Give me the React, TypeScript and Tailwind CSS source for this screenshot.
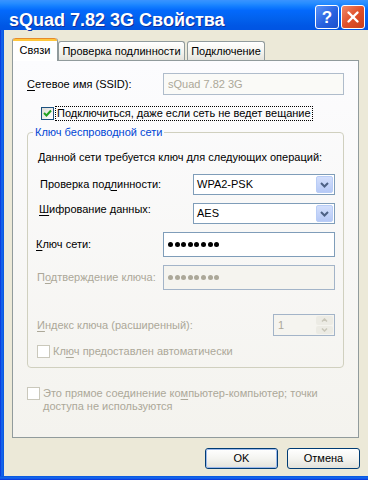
import { X } from "lucide-react";

const ui = "font-['Liberation_Sans',Arial,sans-serif] text-[11px] leading-[13px]";

function U({ children }: { children: string }) {
  return <span className="underline underline-offset-[2px]">{children}</span>;
}

function CheckBox({ checked, disabled }: { checked?: boolean; disabled?: boolean }) {
  return (
    <div
      className={
        "w-[13px] h-[13px] shrink-0 border flex items-center justify-center " +
        (disabled
          ? "border-[#CAC8BB] bg-white"
          : "border-[#1C5180] bg-[linear-gradient(135deg,#DCDCD7,#FFFFFF)]")
      }
    >
      {checked && (
        <svg width="9" height="9" viewBox="0 0 9 9">
          <path d="M1 4 L3.5 6.5 L8 1.5" fill="none" stroke="#21A121" strokeWidth="2" />
        </svg>
      )}
    </div>
  );
}

function Dots({ gray }: { gray?: boolean }) {
  return (
    <div className="flex gap-[1.6px]">
      {Array.from({ length: 8 }).map((_, i) => (
        <span
          key={i}
          className={"w-[5px] h-[5px] rounded-full " + (gray ? "bg-[#ACA899]" : "bg-black")}
        />
      ))}
    </div>
  );
}

function Combo({ value }: { value: string }) {
  return (
    <div className="w-[142px] h-[21px] border border-[#7F9DB9] bg-white flex items-center pl-[3px] pr-[1px]">
      <span className="flex-1">{value}</span>
      <div className="w-[17px] h-[17px] rounded-[2px] border border-[#B9CDF6] bg-[linear-gradient(to_bottom,#D3DFFC,#B6C9F6)] flex items-center justify-center">
        <svg width="9" height="6" viewBox="0 0 9 6">
          <path d="M1 1 L4.5 4.5 L8 1" fill="none" stroke="#4D6185" strokeWidth="2" />
        </svg>
      </div>
    </div>
  );
}

function TabButton({ label, active, className = "" }: { label: string; active?: boolean; className?: string }) {
  if (active) {
    return (
      <div
        className={
          "relative z-10 -mb-px h-[23px] bg-white border-x border-[#919B9C] rounded-t-[3px] flex flex-col whitespace-nowrap " +
          className
        }
      >
        <div className="h-[3px] rounded-t-[3px] border-t border-[#E68B2C] bg-[#FFC73C]" />
        <div className="flex-1 flex items-center justify-center pb-[2px]">{label}</div>
      </div>
    );
  }
  return (
    <div
      className={
        "h-[19px] border-x border-t border-[#919B9C] rounded-t-[3px] bg-[linear-gradient(to_bottom,#FFFFFF,#F3F2EC_60%,#E4E3DC)] flex items-center justify-center whitespace-nowrap " +
        className
      }
    >
      {label}
    </div>
  );
}

function XpButton({ label, isDefault }: { label: string; isDefault?: boolean }) {
  return (
    <div className="w-[73px] h-[21px] rounded-[3px] border border-[#003C74] bg-[linear-gradient(to_bottom,#FFFFFF,#F4F4F0_50%,#E3E2DA)]">
      <div
        className={
          "h-full rounded-[2px] flex items-center justify-center " +
          (isDefault ? "border-[1.5px] border-[#9DB9EB]" : "")
        }
      >
        {label}
      </div>
    </div>
  );
}

export default function App() {
  return (
    <div className={"w-[368px] h-[480px] overflow-hidden flex flex-col bg-[#ECE9D8] text-black " + ui}>
      {/* title bar */}
      <div className="h-[30px] shrink-0 flex items-start pl-[9px] pr-[3px] bg-[linear-gradient(to_bottom,#3A93FF_0%,#288EFF_10%,#127DFF_22%,#0369FC_35%,#0262EE_60%,#0057E5_85%,#0054E3_100%)]">
        <div className="pt-[11px] text-[18px] leading-[18px] font-bold text-white [text-shadow:1px_1px_#0F2F9C]">
          sQuad 7.82 3G Свойства
        </div>
        <div className="ml-auto mt-[5px] flex gap-[2px]">
          <div className="w-[24px] h-[24px] rounded-[3px] border border-white bg-[linear-gradient(135deg,#5A93F8,#2862E0_55%,#1B4FCB)] flex items-center justify-center">
            <span className="text-white font-bold text-[17px] leading-[17px]">?</span>
          </div>
          <div className="w-[24px] h-[24px] rounded-[3px] border border-white bg-[linear-gradient(135deg,#F0896A,#E0502A_50%,#C9401C)] flex items-center justify-center">
            <X className="w-[18px] h-[18px] text-white" strokeWidth={3.2} />
          </div>
        </div>
      </div>

      {/* body */}
      <div className="flex-1 flex">
        <div className="w-[4px] bg-[linear-gradient(to_right,#0831D9,#166AEE_45%,#0855DD)]" />
        <div className="flex-1 flex flex-col pl-[8px] pr-[8px] pt-[8px]">
          {/* tabs */}
          <div className="h-[22px] flex items-end">
            <TabButton label="Связи" active className="w-[46px]" />
            <TabButton label="Проверка подлинности" className="w-[127px]" />
            <TabButton label="Подключение" className="w-[78px] ml-[2px]" />
          </div>

          {/* panel */}
          <div className="h-[378px] mr-px border border-[#919B9C] bg-[linear-gradient(to_bottom,#FCFCFE,#F4F3EE)] flex flex-col">
            <div className="mt-[12px] h-[22px] flex items-center">
              <div className="w-[150px] pl-[14px]">
                <U>С</U>етевое имя (SSID):
              </div>
              <div className="w-[181px] h-[22px] border border-[#AFBCCB] bg-[#FAFAF7] flex items-center pl-[4px] text-[#ACA899]">
                sQuad 7.82 3G
              </div>
            </div>

            <div className="mt-[12px] h-[13px] flex items-center pl-[28px]">
              <CheckBox checked />
              <span className="ml-[1px] px-[1px] border border-dotted border-black leading-[13px]">
                Подключи<U>т</U>ься, даже если сеть не ведет вещание
              </span>
            </div>

            <fieldset className="mt-[6px] ml-[14px] w-[317px] border border-[#D0D0BF] rounded-[4px] pb-[9px]">
              <legend className="ml-[5px] px-[2px] text-[#0046D5] leading-[13px]">Ключ беспроводной сети</legend>
              <div className="mt-[12px] pl-[10px]">Данной сети требуется ключ для следующих операций:</div>

              <div className="mt-[10px] flex items-center">
                <div className="w-[165px] pl-[12px]">
                  Проверка под<U>л</U>инности:
                </div>
                <Combo value="WPA2-PSK" />
              </div>

              <div className="mt-[8px] flex items-start">
                <div className="w-[165px] pl-[11px]">
                  <U>Ш</U>ифрование данных:
                </div>
                <Combo value="AES" />
              </div>

              <div className="mt-[8px] flex items-center">
                <div className="w-[135px] pl-[8px]">
                  <U>К</U>люч сети:
                </div>
                <div className="w-[172px] h-[25px] border border-[#7F9DB9] bg-white flex items-center pl-[4px]">
                  <Dots />
                </div>
              </div>

              <div className="mt-[8px] flex items-center text-[#ACA899]">
                <div className="w-[135px] pl-[9px]">
                  П<U>о</U>дтверждение ключа:
                </div>
                <div className="w-[172px] h-[25px] border border-[#A3B4C8] bg-[#F5F4EF] flex items-center pl-[4px]">
                  <Dots gray />
                </div>
              </div>

              <div className="mt-[24px] flex items-center text-[#ACA899]">
                <div className="w-[245px] pl-[9px]">
                  <U>И</U>ндекс ключа (расширенный):
                </div>
                <div className="w-[62px] h-[22px] border border-[#A3B4C8] bg-[#F5F4EF] flex items-center pl-[4px] pr-[1px]">
                  <span className="flex-1">1</span>
                  <div className="w-[17px] h-[18px] flex flex-col gap-px">
                    <div className="flex-1 rounded-[2px] bg-[#ECEBE4] flex items-center justify-center">
                      <svg width="7" height="4" viewBox="0 0 7 4">
                        <path d="M1 3.5 L3.5 1 L6 3.5" fill="none" stroke="#C9C7BA" strokeWidth="1.5" />
                      </svg>
                    </div>
                    <div className="flex-1 rounded-[2px] bg-[#ECEBE4] flex items-center justify-center">
                      <svg width="7" height="4" viewBox="0 0 7 4">
                        <path d="M1 0.5 L3.5 3 L6 0.5" fill="none" stroke="#C9C7BA" strokeWidth="1.5" />
                      </svg>
                    </div>
                  </div>
                </div>
              </div>

              <div className="mt-[9px] flex items-center pl-[9px] text-[#ACA899]">
                <CheckBox disabled />
                <span className="ml-[3px]">
                  Кл<U>ю</U>ч предоставлен автоматически
                </span>
              </div>
            </fieldset>

            <div className="mt-[19px] flex items-start pl-[14px] text-[#ACA899]">
              <CheckBox disabled />
              <span className="ml-[3px]">
                Это прямое соединение ко<U>м</U>пьютер-компьютер; точки
                <br />
                доступа не используются
              </span>
            </div>
          </div>

          {/* buttons */}
          <div className="mt-[10px] flex justify-end gap-[9px]">
            <XpButton label="OK" isDefault />
            <XpButton label="Отмена" />
          </div>
        </div>
      </div>
      <div className="h-[4px] shrink-0 bg-[linear-gradient(to_bottom,#0855DD,#166AEE_50%,#0831D9)]" />
    </div>
  );
}
